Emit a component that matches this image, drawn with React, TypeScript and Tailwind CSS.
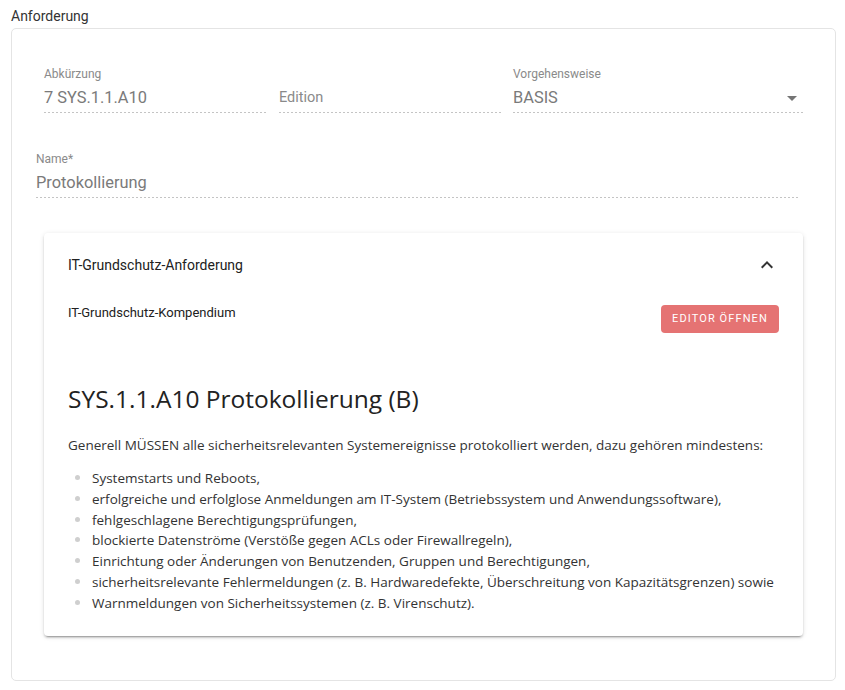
import React from "react";

const items = [
  "Systemstarts und Reboots,",
  "erfolgreiche und erfolglose Anmeldungen am IT-System (Betriebssystem und Anwendungssoftware),",
  "fehlgeschlagene Berechtigungsprüfungen,",
  "blockierte Datenströme (Verstöße gegen ACLs oder Firewallregeln),",
  "Einrichtung oder Änderungen von Benutzenden, Gruppen und Berechtigungen,",
  "sicherheitsrelevante Fehlermeldungen (z. B. Hardwaredefekte, Überschreitung von Kapazitätsgrenzen) sowie",
  "Warnmeldungen von Sicherheitssystemen (z. B. Virenschutz).",
];

function Dots() {
  return <div className="h-px w-full bg-[linear-gradient(to_right,#c4c4c4_50%,transparent_50%)] bg-[length:4px_1px] bg-repeat-x" />;
}

function Field({ label, value, className, arrow }: { label?: string; value: string; className: string; arrow?: boolean }) {
  return (
    <div className={className}>
      <div className="h-4 pt-px text-[12px] leading-4 text-[#8a8a8a]">{label}</div>
      <div className="mt-[5px] flex h-[26px] items-start justify-between leading-6">
        <span className={label ? "text-[16.4px] text-[#7a7a7a]" : "text-[14.5px] text-[#8a8a8a]"}>{value}</span>
        {arrow && (
          <svg viewBox="0 0 24 24" className="h-6 w-6 fill-[#757575]">
            <path d="M7,10L12,15L17,10H7Z" />
          </svg>
        )}
      </div>
      <Dots />
    </div>
  );
}

export default function App() {
  return (
    <div className="min-h-[690px] bg-white pl-[11px] pr-[9px] pt-[6px] font-['Roboto',sans-serif] text-[#212121]">
      <h1 className="h-5 text-[14px] leading-5 text-[#333]">Anforderung</h1>
      <div className="mt-[2px] h-[653px] rounded-[5px] border border-[#e4e4e4] bg-white">
        <div className="flex gap-3 pl-[32px] pr-[31px] pt-[36px]">
          <Field className="w-[223px]" label="Abkürzung" value="7 SYS.1.1.A10" />
          <Field className="w-[222px]" value="Edition" />
          <Field className="flex-1" label="Vorgehensweise" value="BASIS" arrow />
        </div>
        <div className="pl-[24px] pr-[36px] pt-[37px]">
          <Field className="w-full" label="Name*" value="Protokollierung" />
        </div>
        <div className="mx-[32px] mt-[35px] rounded-[4px] bg-white shadow-[0_3px_1px_-2px_rgba(0,0,0,0.2),0_2px_2px_0_rgba(0,0,0,0.14),0_1px_5px_0_rgba(0,0,0,0.12)]">
          <div className="flex h-16 items-center justify-between px-6">
            <span className="text-[14px] text-[#212121]">IT-Grundschutz-Anforderung</span>
            <svg viewBox="0 0 24 24" className="h-6 w-6 fill-[#333]">
              <path d="M7.41,15.41L12,10.83L16.59,15.41L18,14L12,8L6,14L7.41,15.41Z" />
            </svg>
          </div>
          <div className="px-6 pb-[22px]">
            <div className="flex items-start justify-between">
              <span className="mt-[6px] text-[13px] leading-5 text-[#212121]">IT-Grundschutz-Kompendium</span>
              <button className="mt-[8px] h-[28px] w-[118px] rounded-[4px] bg-[#e57373] text-[11px] font-normal tracking-[0.1em] text-white">
                EDITOR ÖFFNEN
              </button>
            </div>
            <div className="font-['Open_Sans',sans-serif] text-[#333]">
              <h2 className="mt-[50px] text-[24.5px] leading-8 text-[#222]">SYS.1.1.A10 Protokollierung (B)</h2>
              <p className="mt-[20px] text-[13.5px] leading-[21px]">
                Generell MÜSSEN alle sicherheitsrelevanten Systemereignisse protokolliert werden, dazu gehören mindestens:
              </p>
              <ul className="mt-[12px] text-[13.5px] leading-[20.8px]">
                {items.map((t) => (
                  <li key={t} className="flex items-start">
                    <span className="ml-[7px] mr-[12px] mt-[7px] h-[5px] w-[5px] shrink-0 rounded-full bg-[#cfcfcf]" />
                    <span>{t}</span>
                  </li>
                ))}
              </ul>
            </div>
          </div>
        </div>
      </div>
    </div>
  );
}
